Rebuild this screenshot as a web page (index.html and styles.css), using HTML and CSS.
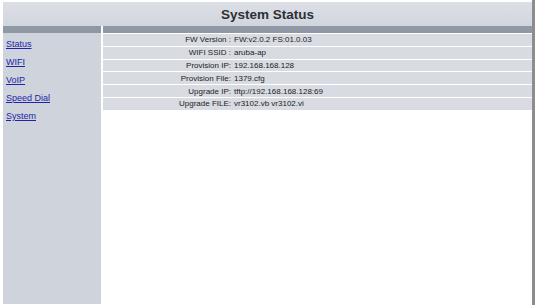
FILE: index.html
```html
<!DOCTYPE html>
<html>
<head>
<meta charset="utf-8">
<title>System Status</title>
<link rel="stylesheet" href="styles.css">
</head>
<body>
<div class="screen">
  <div class="main">
    <div class="header">System Status</div>
    <div class="body">
      <div class="bar"></div>
      <div class="bar"></div>
      <nav class="side">
        <a href="#">Status</a>
        <a href="#">WIFI</a>
        <a href="#">VoIP</a>
        <a href="#">Speed Dial</a>
        <a href="#">System</a>
      </nav>
      <div class="content">
        <div class="info">
          <div class="row"><span class="lbl">FW Version :</span><span class="val">FW:v2.0.2 FS:01.0.03</span></div>
          <div class="row"><span class="lbl">WIFI SSID :</span><span class="val">aruba-ap</span></div>
          <div class="row"><span class="lbl">Provision IP:</span><span class="val">192.168.168.128</span></div>
          <div class="row"><span class="lbl">Provision File:</span><span class="val">1379.cfg</span></div>
          <div class="row"><span class="lbl">Upgrade IP:</span><span class="val">tftp://192.168.168.128:69</span></div>
          <div class="row"><span class="lbl">Upgrade FILE:</span><span class="val">vr3102.vb vr3102.vi</span></div>
        </div>
      </div>
    </div>
  </div>
  <div class="edge"></div>
</div>
</body>
</html>
```
FILE: styles.css
```css
html, body {
  margin: 0;
  padding: 0;
  background: #ffffff;
}
body {
  font-family: "Liberation Sans", Arial, sans-serif;
  color: #333333;
}
.screen {
  display: flex;
  width: 535px;
  height: 305px;
}
.main {
  flex: 1;
  display: flex;
  flex-direction: column;
  padding: 2px 0 1px 3px;
}
.edge {
  width: 3px;
  background: #8d8d8d;
}
.header {
  height: 24px;
  line-height: 25px;
  text-align: center;
  font-weight: bold;
  font-size: 13.5px;
  color: #2e3036;
  background: linear-gradient(#dcdfe6, #d1d5dd);
}
.body {
  flex: 1;
  display: grid;
  grid-template-columns: 98px 1fr;
  grid-template-rows: 7px 1fr;
  column-gap: 2px;
}
.bar {
  background: #8f98a4;
}
.side {
  background: #ced3dc;
  display: flex;
  flex-direction: column;
  padding: 6px 0 0 3px;
  gap: 7px;
}
.side a {
  font-size: 9px;
  line-height: 11px;
  color: #2323a8;
  text-decoration: underline;
}
.content {
  padding-top: 1px;
}
.info {
  display: flex;
  flex-direction: column;
  gap: 1px;
}
.row {
  display: flex;
  height: 11.8px;
  align-items: center;
  background: #d8dbe2;
  font-size: 8px;
  color: #222222;
}
.lbl {
  width: 128px;
  text-align: right;
}
.val {
  padding-left: 3px;
}
```
